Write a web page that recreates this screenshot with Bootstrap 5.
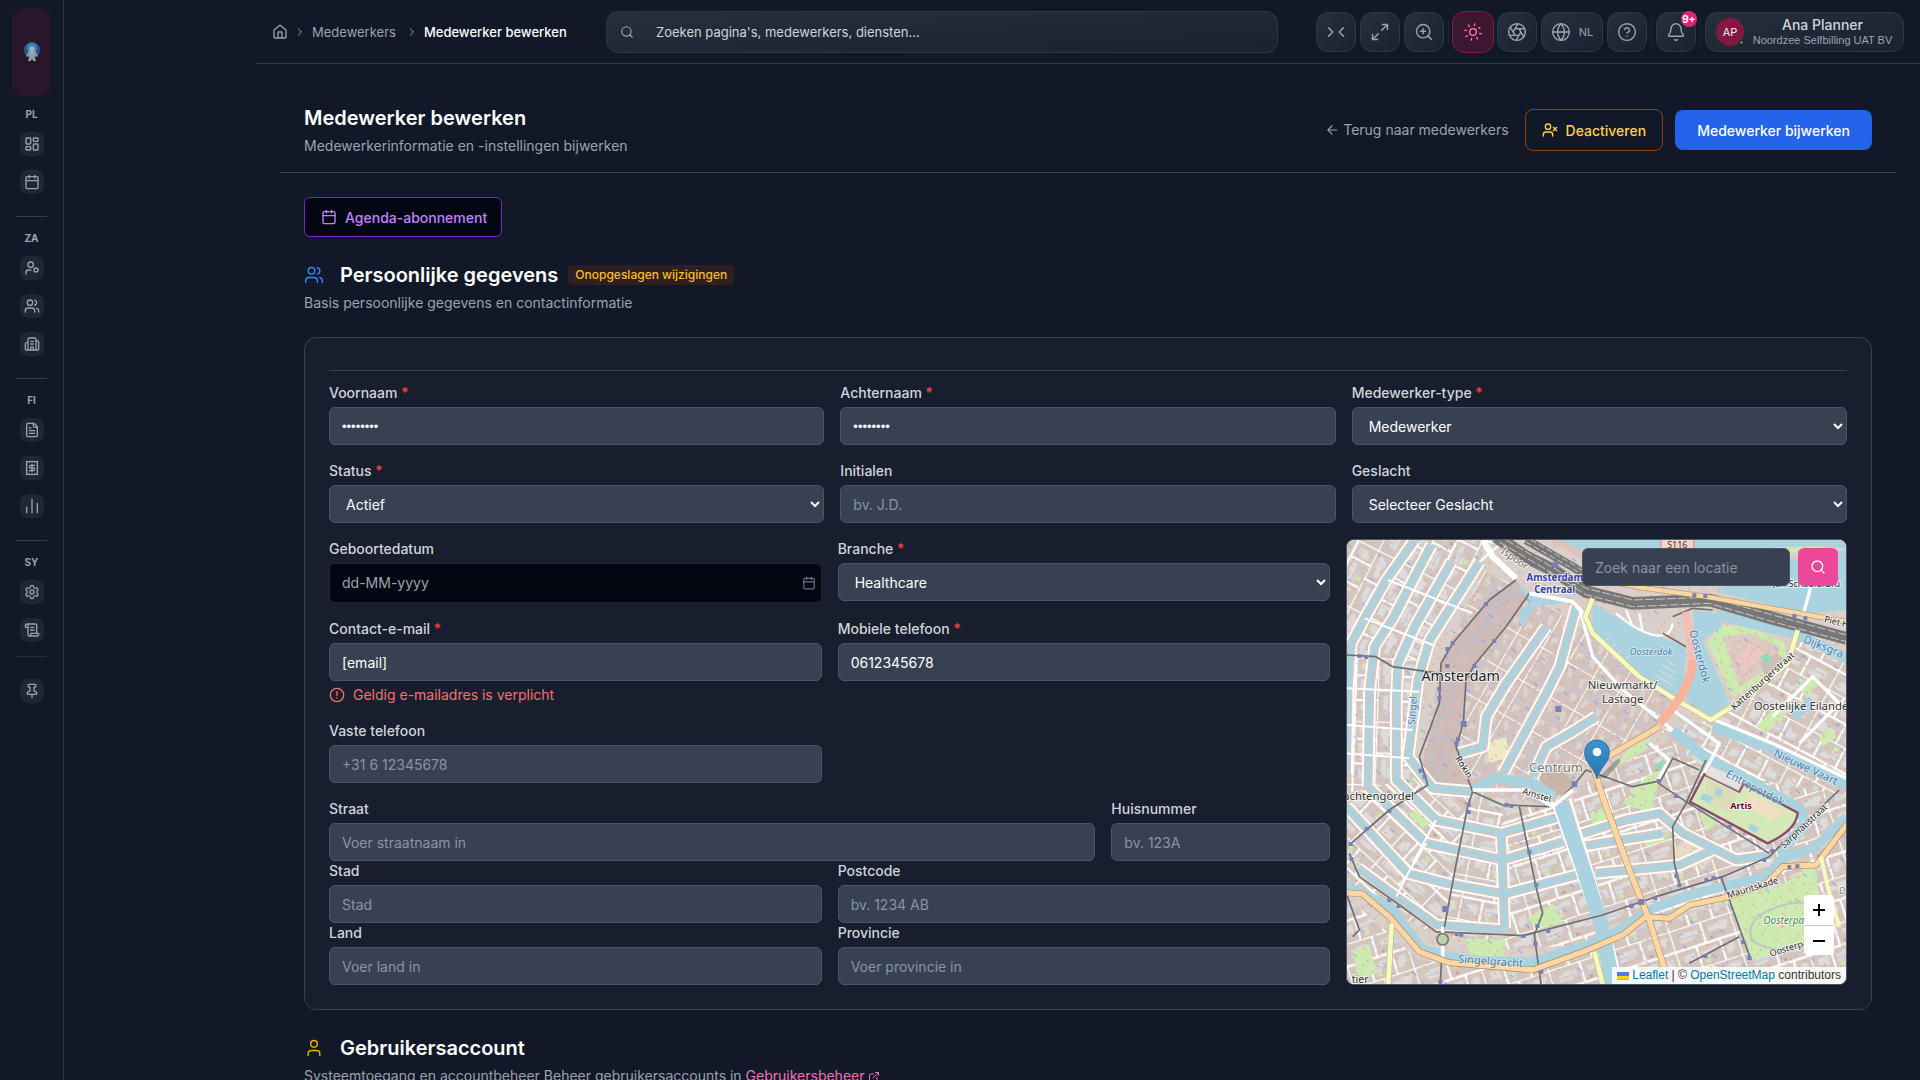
<!DOCTYPE html>
<html lang="nl">
<head>
    <meta charset="UTF-8">
    <meta name="viewport" content="width=device-width, initial-scale=1.0">
    <title>Medewerker bewerken</title>

    <!-- Bootstrap CSS -->
    <link href="https://cdn.jsdelivr.net/npm/bootstrap@5.3.2/dist/css/bootstrap.min.css" rel="stylesheet">
    <style>
        body {
            font-family: Inter, "Liberation Sans", sans-serif;
            font-size: 14px;
            line-height: 20px;
            background: #111827;
            color: #d1d5db;
        }
        svg { flex-shrink: 0; }
        a { text-decoration: none; }
        .ico {
            width: 16px;
            height: 16px;
            fill: none;
            stroke: currentColor;
            stroke-width: 2;
            stroke-linecap: round;
            stroke-linejoin: round;
        }
        .ico-14 { width: 14px; height: 14px; }
        .ico-12 { width: 12px; height: 12px; }
        .ico-20 { width: 20px; height: 20px; stroke-width: 1.7; }
        .fw-mid { font-weight: 500; }
        .muted { color: #9ca3af; }

        /* Sidebar */
        .side { width: 64px; border-right: 1px solid #2c3748; padding-top: 8px; }
        .side-logo { width: 39px; height: 88px; border-radius: 12px; background: #28172b; margin-bottom: 10px; }
        .side-label { font-size: 10px; line-height: 16px; font-weight: 700; color: #9ca3af; margin-bottom: 10px; }
        .side-icons { gap: 14px; }
        .side-link { width: 24px; height: 24px; border-radius: 8px; background: #1e2735; color: #9ca3af; }
        .side-line { width: 31px; height: 1px; background: #323d4e; margin: 22px 0 13px; }
        .side-line-end { margin: 14px 0 22px; background: #232d3c; }

        /* Top bar */
        .page-col { margin-left: 192px; min-width: 0; }
        .topbar { height: 64px; border-bottom: 1px solid #2c3748; padding: 0 16px; }
        .crumbs { width: 334px; gap: 6px; font-size: 13px; }
        .crumbs a { color: #9ca3af; }
        .glass { background: linear-gradient(to bottom right, #262f3d, #1a2231); border: 1px solid #2e3746; border-radius: 12px; color: #9ca3af; }
        .searchbar { height: 42px; width: 672px; padding: 0 13px; gap: 22px; }
        .searchbar input { background: none; border: 0; outline: 0; color: #d1d5db; padding: 0; font-size: 13px; }
        .searchbar input::placeholder { color: #d1d5db; opacity: 1; }
        .tools { gap: 4px; }
        .tool { height: 40px; min-width: 40px; padding: 0; }
        .tool-lang { width: 62px; gap: 8px; font-size: 11px; }
        .tool-sun { width: 42px; height: 42px; margin: 0 -1px; background: #3d1630; border-color: #7a1d49; color: #f472b6; }
        .tool-line { width: 1px; height: 24px; background: #1c2636; }
        .bell-badge { position: absolute; top: -2px; right: -2px; width: 16px; height: 16px; border-radius: 8px; background: #db2777; color: #fff; font-size: 10px; line-height: 16px; font-weight: 700; }
        .userbox { height: 40px; width: 199px; padding: 0 10px; gap: 8px; }
        .avatar { width: 28px; height: 28px; border-radius: 14px; background: #831843; color: #fce7f3; font-size: 11px; position: relative; }
        .avatar-dot { position: absolute; right: 0; bottom: 1px; width: 5px; height: 5px; border-radius: 3px; background: #22a34a; border: 1px solid #111827; }
        .user-name { font-size: 14px; line-height: 16px; color: #d1d5db; }
        .user-org { font-family: "Liberation Sans", sans-serif; font-size: 11px; line-height: 14px; }

        /* Page */
        .content { padding: 0 24px; }
        .page-head { padding: 40px 24px 16px; border-bottom: 1px solid #374151; }
        .page-head h1, .section-head h2 { font-size: 20px; line-height: 28px; font-weight: 600; color: #fff; }
        .page-body { padding: 24px; }
        .head-btn { height: 40px; border-radius: 8px; padding: 0 21px; font-size: 14px; font-weight: 500; }
        .btn-off { height: 42px; padding: 0 16px; margin-right: 12px; border: 1px solid #92400e; color: #fcd34d; }
        .btn-save { background: #2563eb; color: #fff; }
        .btn-agenda { border: 1px solid #7e22ce; border-radius: 6px; background: #030712; color: #c084fc; padding: 0 14px 0 16px; }
        .section-head { gap: 16px; margin-top: 24px; }
        .unsaved { height: 20px; padding: 0 7px; border-radius: 4px; background: #2f1f22; color: #fbbf24; font-size: 12px; font-weight: 500; margin-left: -6px; }
        .panel { border: 1px solid #374151; border-radius: 12px; background: #171e2d; padding: 32px 24px 24px; margin-top: 24px; }
        .panel-line { border-top: 1px solid #374151; padding-top: 12px; }
        .pink-link { color: #f472b6; }

        /* Form */
        .panel label { display: block; font-weight: 500; color: #d1d5db; margin-bottom: 4px; }
        .panel label span { color: #ef4444; }
        .field {
            display: block;
            width: 100%;
            height: 38px;
            border: 1px solid #4b5563;
            border-radius: 6px;
            background: #374151;
            color: #fff;
            padding: 0 12px;
            font-size: 14px;
        }
        .field::placeholder { color: #8b94a3; opacity: 1; }
        .masked { font-family: "Liberation Sans", sans-serif; font-size: 13px; }
        .date-field { height: 40px; background: #030712; border: 1px solid #1f2937; border-radius: 6px; padding: 0 5px 0 12px; }
        .date-field input { background: none; border: 0; outline: 0; padding: 0; color: #fff; }
        .date-field input::placeholder { color: #9ca3af; opacity: 1; }
        .form-split { display: grid; grid-template-columns: 2fr 1fr; gap: 16px; margin-top: 16px; }
        .form-pair { display: grid; grid-template-columns: 1fr 1fr; gap: 0 16px; }
        .form-street { display: grid; grid-template-columns: 7fr 2fr; gap: 0 16px; }
        .form-error { color: #f87171; margin-top: 4px; gap: 8px; }

        /* Map */
        .map { position: relative; border-radius: 8px; overflow: hidden; background: #d9d0c9; border: 1px solid #4b5563; }
        .map-canvas { position: absolute; width: 100%; height: 100%; }
        .map-search { position: absolute; top: 8px; right: 8px; gap: 8px; }
        .map-search .field { width: 208px; }
        .map-search button { width: 40px; height: 38px; border: 0; border-radius: 6px; background: #ec4899; color: #fff; }
        .map-zoom { position: absolute; right: 12px; bottom: 29px; border-radius: 4px; overflow: hidden; }
        .map-zoom button { width: 30px; height: 30px; border: 0; background: #fff; color: #000; }
        .map-zoom button + button { border-top: 1px solid #ccc; }
        .map-credit { position: absolute; right: 0; bottom: 0; height: 17px; padding: 0 5px; background: rgba(255, 255, 255, .85); color: #333; font: 12px/17px "Liberation Sans", Arial, sans-serif; gap: 3px; white-space: pre; }
        .map-credit a { color: #0078a8; }
    </style>
</head>
<body class="overflow-hidden">
    <!-- Icon set -->
    <svg class="d-none">
        <symbol id="i-dash" viewBox="0 0 24 24"><rect x="3" y="3" width="7" height="9" rx="1"/><rect x="14" y="3" width="7" height="5" rx="1"/><rect x="14" y="12" width="7" height="9" rx="1"/><rect x="3" y="16" width="7" height="5" rx="1"/></symbol>
        <symbol id="i-cal" viewBox="0 0 24 24"><path d="M8 2v4M16 2v4M3 10h18"/><rect x="3" y="4" width="18" height="18" rx="2"/></symbol>
        <symbol id="i-usercog" viewBox="0 0 24 24"><circle cx="10" cy="7" r="4"/><path d="M10.3 15H7a4 4 0 0 0-4 4v2"/><circle cx="18" cy="15" r="3"/></symbol>
        <symbol id="i-users" viewBox="0 0 24 24"><path d="M16 21v-2a4 4 0 0 0-4-4H6a4 4 0 0 0-4 4v2"/><circle cx="9" cy="7" r="4"/><path d="M22 21v-2a4 4 0 0 0-3-3.87M16 3.13a4 4 0 0 1 0 7.75"/></symbol>
        <symbol id="i-build" viewBox="0 0 24 24"><path d="M10 12h4M10 8h4M14 21v-3a2 2 0 0 0-4 0v3M6 10H4a2 2 0 0 0-2 2v7a2 2 0 0 0 2 2h16a2 2 0 0 0 2-2V9a2 2 0 0 0-2-2h-2M6 21V5a2 2 0 0 1 2-2h8a2 2 0 0 1 2 2v16"/></symbol>
        <symbol id="i-file" viewBox="0 0 24 24"><path d="M15 2H6a2 2 0 0 0-2 2v16a2 2 0 0 0 2 2h12a2 2 0 0 0 2-2V7ZM14 2v4a2 2 0 0 0 2 2h4M10 9H8M16 13H8M16 17H8"/></symbol>
        <symbol id="i-receipt" viewBox="0 0 24 24"><path d="M4 2v20l2-1 2 1 2-1 2 1 2-1 2 1 2-1 2 1V2l-2 1-2-1-2 1-2-1-2 1-2-1-2 1ZM16 8h-6a2 2 0 1 0 0 4h4a2 2 0 1 1 0 4H8M12 17.5v-11"/></symbol>
        <symbol id="i-chart" viewBox="0 0 24 24"><path d="M4 22v-8M12 22V2M20 22V8"/></symbol>
        <symbol id="i-gear" viewBox="0 0 24 24"><path d="M9.671 4.136a2.34 2.34 0 0 1 4.659 0 2.34 2.34 0 0 0 3.319 1.915 2.34 2.34 0 0 1 2.33 4.033 2.34 2.34 0 0 0 0 3.831 2.34 2.34 0 0 1-2.33 4.033 2.34 2.34 0 0 0-3.319 1.915 2.34 2.34 0 0 1-4.659 0 2.34 2.34 0 0 0-3.32-1.915 2.34 2.34 0 0 1-2.33-4.033 2.34 2.34 0 0 0 0-3.831A2.34 2.34 0 0 1 6.35 6.051a2.34 2.34 0 0 0 3.319-1.915"/><circle cx="12" cy="12" r="3"/></symbol>
        <symbol id="i-scroll" viewBox="0 0 24 24"><path d="M15 12h-5M15 8h-5M19 17V5a2 2 0 0 0-2-2H4M8 21h12a2 2 0 0 0 2-2v-1a1 1 0 0 0-1-1H11a1 1 0 0 0-1 1v1a2 2 0 1 1-4 0V5a2 2 0 1 0-4 0v2a1 1 0 0 0 1 1h3"/></symbol>
        <symbol id="i-pin" viewBox="0 0 24 24"><path d="M12 17v5M9 10.76a2 2 0 0 1-1.11 1.79l-1.78.9A2 2 0 0 0 5 15.24V16a1 1 0 0 0 1 1h12a1 1 0 0 0 1-1v-.76a2 2 0 0 0-1.11-1.79l-1.78-.9A2 2 0 0 1 15 10.76V7a1 1 0 0 1 1-1 2 2 0 0 0 0-4H8a2 2 0 0 0 0 4 1 1 0 0 1 1 1z"/></symbol>
        <symbol id="i-home" viewBox="0 0 24 24"><path d="M15 21v-8a1 1 0 0 0-1-1h-4a1 1 0 0 0-1 1v8M3 10a2 2 0 0 1 .709-1.528l7-6a2 2 0 0 1 2.582 0l7 6A2 2 0 0 1 21 10v9a2 2 0 0 1-2 2H5a2 2 0 0 1-2-2z"/></symbol>
        <symbol id="i-chev" viewBox="0 0 24 24"><path d="m9 18 6-6-6-6"/></symbol>
        <symbol id="i-search" viewBox="0 0 24 24"><circle cx="11" cy="11" r="8"/><path d="m21 21-4.3-4.3"/></symbol>
        <symbol id="i-collapse" viewBox="0 0 24 24"><path d="m21 17-5-5 5-5M3 17l5-5-5-5"/></symbol>
        <symbol id="i-max" viewBox="0 0 24 24"><path d="M15 3h6v6M21 3l-7 7M3 21l7-7M9 21H3v-6"/></symbol>
        <symbol id="i-zoom" viewBox="0 0 24 24"><circle cx="11" cy="11" r="8"/><path d="m21 21-4.35-4.35M11 8v6M8 11h6"/></symbol>
        <symbol id="i-sun" viewBox="0 0 24 24"><g transform="rotate(12 12 12)"><circle cx="12" cy="12" r="4"/><path d="M12 2v2M12 20v2M4.93 4.93l1.41 1.41M17.66 17.66l1.41 1.41M2 12h2M20 12h2M6.34 17.66l-1.41 1.41M19.07 4.93l-1.41 1.41"/></g></symbol>
        <symbol id="i-aperture" viewBox="0 0 24 24"><circle cx="12" cy="12" r="10"/><path d="m14.31 8 5.74 9.94M9.69 8h11.48M7.38 12l5.74-9.94M9.69 16 3.95 6.06M14.31 16H2.83M16.62 12l-5.74 9.94"/></symbol>
        <symbol id="i-globe" viewBox="0 0 24 24"><circle cx="12" cy="12" r="10"/><path d="M12 2a14.5 14.5 0 0 0 0 20 14.5 14.5 0 0 0 0-20M2 12h20"/></symbol>
        <symbol id="i-help" viewBox="0 0 24 24"><circle cx="12" cy="12" r="10"/><path d="M9.09 9a3 3 0 0 1 5.83 1c0 2-3 3-3 3M12 17h.01"/></symbol>
        <symbol id="i-bell" viewBox="0 0 24 24"><path d="M10.268 21a2 2 0 0 0 3.464 0M3.262 15.326A1 1 0 0 0 4 17h16a1 1 0 0 0 .74-1.673C19.41 13.956 18 12.499 18 8A6 6 0 0 0 6 8c0 4.499-1.411 5.956-2.738 7.326"/></symbol>
        <symbol id="i-back" viewBox="0 0 24 24"><path d="m12 19-7-7 7-7M20 12H5"/></symbol>
        <symbol id="i-userx" viewBox="0 0 24 24"><path d="M16 21v-2a4 4 0 0 0-4-4H6a4 4 0 0 0-4 4v2"/><circle cx="9" cy="7" r="4"/><path d="m17 8 5 5M22 8l-5 5"/></symbol>
        <symbol id="i-user" viewBox="0 0 24 24"><path d="M19 21v-2a4 4 0 0 0-4-4H9a4 4 0 0 0-4 4v2"/><circle cx="12" cy="7" r="4"/></symbol>
        <symbol id="i-alert" viewBox="0 0 24 24"><circle cx="12" cy="12" r="10"/><path d="M12 7v6M12 16.5h.01"/></symbol>
        <symbol id="i-ext" viewBox="0 0 24 24"><path d="M15 3h6v6M10 14 21 3M18 13v6a2 2 0 0 1-2 2H5a2 2 0 0 1-2-2V8a2 2 0 0 1 2-2h6"/></symbol>
    </svg>

    <div class="d-flex vh-100">
        <!-- Sidebar -->
        <aside class="side d-flex flex-column align-items-center flex-shrink-0">
            <a href="#" class="side-logo d-flex align-items-center justify-content-center" aria-label="Home">
                <svg width="16" height="20" viewBox="0 0 16 20">
                    <circle cx="8" cy="8" r="8" fill="#235a8c"/>
                    <circle cx="8" cy="6" r="5" fill="#3b82b8"/>
                    <circle cx="8" cy="7" r="2.5" fill="#a8b4bf"/>
                    <path d="M5 9h6l3 5-1 1-2-2v3l1 3H9l-1-3-1 3H4l1-3v-3l-2 2-1-1z" fill="#98a1aa"/>
                    <circle cx="8" cy="12" r="1.3" fill="#4cc3e8"/>
                </svg>
            </a>
            <div class="side-label">PL</div>
            <nav class="side-icons d-flex flex-column">
                <a href="#" class="side-link d-flex align-items-center justify-content-center" aria-label="Dashboard"><svg class="ico"><use href="#i-dash"/></svg></a>
                <a href="#" class="side-link d-flex align-items-center justify-content-center" aria-label="Agenda"><svg class="ico"><use href="#i-cal"/></svg></a>
            </nav>
            <div class="side-line"></div>
            <div class="side-label">ZA</div>
            <nav class="side-icons d-flex flex-column">
                <a href="#" class="side-link d-flex align-items-center justify-content-center" aria-label="Medewerkers"><svg class="ico"><use href="#i-usercog"/></svg></a>
                <a href="#" class="side-link d-flex align-items-center justify-content-center" aria-label="Klanten"><svg class="ico"><use href="#i-users"/></svg></a>
                <a href="#" class="side-link d-flex align-items-center justify-content-center" aria-label="Organisaties"><svg class="ico"><use href="#i-build"/></svg></a>
            </nav>
            <div class="side-line"></div>
            <div class="side-label">FI</div>
            <nav class="side-icons d-flex flex-column">
                <a href="#" class="side-link d-flex align-items-center justify-content-center" aria-label="Facturen"><svg class="ico"><use href="#i-file"/></svg></a>
                <a href="#" class="side-link d-flex align-items-center justify-content-center" aria-label="Betalingen"><svg class="ico"><use href="#i-receipt"/></svg></a>
                <a href="#" class="side-link d-flex align-items-center justify-content-center" aria-label="Rapporten"><svg class="ico"><use href="#i-chart"/></svg></a>
            </nav>
            <div class="side-line"></div>
            <div class="side-label">SY</div>
            <nav class="side-icons d-flex flex-column">
                <a href="#" class="side-link d-flex align-items-center justify-content-center" aria-label="Instellingen"><svg class="ico"><use href="#i-gear"/></svg></a>
                <a href="#" class="side-link d-flex align-items-center justify-content-center" aria-label="Logboek"><svg class="ico"><use href="#i-scroll"/></svg></a>
            </nav>
            <div class="side-line side-line-end"></div>
            <a href="#" class="side-link d-flex align-items-center justify-content-center" aria-label="Vastzetten"><svg class="ico"><use href="#i-pin"/></svg></a>
        </aside>

        <div class="page-col flex-grow-1">
            <!-- Top bar -->
            <header class="topbar d-flex align-items-center">
                <nav class="crumbs d-flex align-items-center flex-shrink-0">
                    <a href="#" class="d-flex" aria-label="Home"><svg class="ico"><use href="#i-home"/></svg></a>
                    <svg class="ico ico-12 muted"><use href="#i-chev"/></svg>
                    <a href="#" class="me-1">Medewerkers</a>
                    <svg class="ico ico-12 muted"><use href="#i-chev"/></svg>
                    <span class="text-white fw-mid text-nowrap">Medewerker bewerken</span>
                </nav>
                <div class="searchbar glass d-flex align-items-center">
                    <svg class="ico ico-14"><use href="#i-search"/></svg>
                    <input type="text" class="flex-grow-1" placeholder="Zoeken pagina's, medewerkers, diensten..." aria-label="Zoeken">
                </div>
                <div class="tools d-flex align-items-center ms-auto">
                    <button class="tool glass d-flex align-items-center justify-content-center" aria-label="Inklappen"><svg class="ico ico-20"><use href="#i-collapse"/></svg></button>
                    <button class="tool glass d-flex align-items-center justify-content-center" aria-label="Volledig scherm"><svg class="ico ico-20"><use href="#i-max"/></svg></button>
                    <button class="tool glass d-flex align-items-center justify-content-center" aria-label="Zoom"><svg class="ico ico-20"><use href="#i-zoom"/></svg></button>
                    <div class="tool-line"></div>
                    <button class="tool tool-sun glass d-flex align-items-center justify-content-center" aria-label="Thema"><svg class="ico ico-20"><use href="#i-sun"/></svg></button>
                    <button class="tool glass d-flex align-items-center justify-content-center" aria-label="Kleuren"><svg class="ico ico-20"><use href="#i-aperture"/></svg></button>
                    <button class="tool tool-lang glass d-flex align-items-center justify-content-center"><svg class="ico ico-20"><use href="#i-globe"/></svg>NL</button>
                    <button class="tool glass d-flex align-items-center justify-content-center" aria-label="Help"><svg class="ico ico-20"><use href="#i-help"/></svg></button>
                    <div class="tool-line"></div>
                    <button class="tool glass d-flex align-items-center justify-content-center position-relative" aria-label="Meldingen"><svg class="ico ico-20"><use href="#i-bell"/></svg><span class="bell-badge">9+</span></button>
                    <div class="tool-line"></div>
                    <button class="userbox glass d-flex align-items-center">
                        <span class="avatar d-flex align-items-center justify-content-center flex-shrink-0">AP<span class="avatar-dot"></span></span>
                        <span class="flex-grow-1 text-center text-nowrap">
                            <span class="user-name fw-mid d-block">Ana Planner</span>
                            <span class="user-org d-block">Noordzee Selfbilling UAT BV</span>
                        </span>
                    </button>
                </div>
            </header>

            <main class="content">
                <div class="page-head d-flex justify-content-between align-items-center">
                    <div>
                        <h1 class="mb-1">Medewerker bewerken</h1>
                        <p class="muted mb-0">Medewerkerinformatie en -instellingen bijwerken</p>
                    </div>
                    <div class="d-flex align-items-center">
                        <a href="#" class="muted d-flex align-items-center gap-1 me-3"><svg class="ico ico-14"><use href="#i-back"/></svg>Terug naar medewerkers</a>
                        <button class="btn head-btn btn-off d-flex align-items-center gap-2"><svg class="ico"><use href="#i-userx"/></svg>Deactiveren</button>
                        <button class="btn head-btn btn-save">Medewerker bijwerken</button>
                    </div>
                </div>

                <div class="page-body">
                    <button class="btn head-btn btn-agenda d-inline-flex align-items-center gap-2"><svg class="ico"><use href="#i-cal"/></svg>Agenda-abonnement</button>

                    <div class="section-head d-flex align-items-center">
                        <svg class="ico ico-20" color="#3b82f6"><use href="#i-users"/></svg>
                        <h2 class="mb-0">Persoonlijke gegevens</h2>
                        <span class="unsaved">Onopgeslagen wijzigingen</span>
                    </div>
                    <p class="muted mt-1 mb-0">Basis persoonlijke gegevens en contactinformatie</p>

                    <form class="panel">
                        <div class="panel-line">
                            <div class="row g-3">
                                <div class="col-4">
                                    <label for="firstName">Voornaam <span>*</span></label>
                                    <input type="text" class="field masked" id="firstName" value="••••••••">
                                </div>
                                <div class="col-4">
                                    <label for="lastName">Achternaam <span>*</span></label>
                                    <input type="text" class="field masked" id="lastName" value="••••••••">
                                </div>
                                <div class="col-4">
                                    <label for="kind">Medewerker-type <span>*</span></label>
                                    <select class="field" id="kind"><option>Medewerker</option></select>
                                </div>
                                <div class="col-4">
                                    <label for="status">Status <span>*</span></label>
                                    <select class="field" id="status"><option>Actief</option></select>
                                </div>
                                <div class="col-4">
                                    <label for="initials">Initialen</label>
                                    <input type="text" class="field" id="initials" placeholder="bv. J.D.">
                                </div>
                                <div class="col-4">
                                    <label for="gender">Geslacht</label>
                                    <select class="field" id="gender"><option>Selecteer Geslacht</option></select>
                                </div>
                            </div>
                        </div>

                        <div class="form-split">
                            <div>
                                <div class="form-pair mb-3">
                                    <div>
                                        <label for="birth">Geboortedatum</label>
                                        <div class="date-field d-flex align-items-center">
                                            <input type="text" class="flex-grow-1" id="birth" placeholder="dd-MM-yyyy">
                                            <svg class="ico ico-14" color="#6b7280"><use href="#i-cal"/></svg>
                                        </div>
                                    </div>
                                    <div>
                                        <label for="branch">Branche <span>*</span></label>
                                        <select class="field" id="branch"><option>Healthcare</option></select>
                                    </div>
                                </div>
                                <div class="form-pair mb-3">
                                    <div>
                                        <label for="email">Contact-e-mail <span>*</span></label>
                                        <input type="text" class="field" id="email" value="[email]">
                                        <div class="form-error d-flex align-items-center"><svg class="ico"><use href="#i-alert"/></svg>Geldig e-mailadres is verplicht</div>
                                    </div>
                                    <div>
                                        <label for="mobile">Mobiele telefoon <span>*</span></label>
                                        <input type="text" class="field" id="mobile" value="0612345678">
                                    </div>
                                </div>
                                <div class="form-pair mb-3">
                                    <div>
                                        <label for="phone">Vaste telefoon</label>
                                        <input type="text" class="field" id="phone" placeholder="+31 6 12345678">
                                    </div>
                                </div>
                                <div class="form-street">
                                    <div>
                                        <label for="street">Straat</label>
                                        <input type="text" class="field" id="street" placeholder="Voer straatnaam in">
                                    </div>
                                    <div>
                                        <label for="houseNo">Huisnummer</label>
                                        <input type="text" class="field" id="houseNo" placeholder="bv. 123A">
                                    </div>
                                </div>
                                <div class="form-pair">
                                    <div>
                                        <label for="city">Stad</label>
                                        <input type="text" class="field" id="city" placeholder="Stad">
                                    </div>
                                    <div>
                                        <label for="zip">Postcode</label>
                                        <input type="text" class="field" id="zip" placeholder="bv. 1234 AB">
                                    </div>
                                    <div>
                                        <label for="country">Land</label>
                                        <input type="text" class="field" id="country" placeholder="Voer land in">
                                    </div>
                                    <div>
                                        <label for="province">Provincie</label>
                                        <input type="text" class="field" id="province" placeholder="Voer provincie in">
                                    </div>
                                </div>
                            </div>

                            <!-- Map -->
                            <div class="map">
                                <svg class="map-canvas" viewBox="21 30 1500 1332" preserveAspectRatio="xMidYMid slice" font-family="Noto Sans, sans-serif">
                                    <defs>
                                        <!-- city blocks: buildings round courtyards, streets between them -->
                                        <pattern id="blocks" width="132" height="190" patternUnits="userSpaceOnUse" patternTransform="rotate(27)">
                                            <rect width="132" height="190" fill="#d2c6be"/>
                                            <path d="M16 14h12v8h14v22h-6v34H20V52h-6V26zM82 16h26v12h8v16H92v-8H82zM80 66h16v30h14v22H86V96h-6zM18 112h20v14h8v42H24v-16h-6zM82 140h30v10h-8v24H84z" fill="#dedcda"/>
                                            <path d="M0 0H132M0 0V190M66 0V190M66 54H132M0 96H66M66 128H132" fill="none" stroke="#fff" stroke-width="7"/>
                                            <path d="M34 96V190M98 54V128" stroke="#c9c9d8" stroke-width="4"/>
                                            <path d="M50 70h8v10h-8z" fill="#b9a79b"/>
                                            <path d="M112 98h12v14h-12z" fill="#cdebb0"/>
                                        </pattern>
                                        <pattern id="blocksW" href="#blocks" patternTransform="rotate(2)"/>
                                        <pattern id="blocksSW" href="#blocks" patternTransform="rotate(-47)"/>
                                        <pattern id="blocksS" href="#blocks" patternTransform="translate(0 20) rotate(101)"/>
                                        <pattern id="blocksSE" href="#blocks" patternTransform="rotate(72)"/>
                                        <pattern id="blocksE" href="#blocks" patternTransform="rotate(-62)"/>
                                        <pattern id="blocksC" width="88" height="116" patternUnits="userSpaceOnUse" patternTransform="rotate(30)">
                                            <rect width="88" height="116" fill="#d3c3bb"/>
                                            <path d="M14 12h10v10h8v18H20V30h-6zM58 20h16v30H64V36h-6zM12 72h20v14H20v12h-8zM56 74h18v22H60V84h-4z" fill="#dbd5d1"/>
                                            <path d="M0 0H88M0 0V116" stroke="#fff" stroke-width="6"/>
                                            <path d="M0 58H88M44 0V58M50 58V116" fill="none" stroke="#c6c6d6" stroke-width="5"/>
                                        </pattern>
                                        <pattern id="dots" width="94" height="78" patternUnits="userSpaceOnUse" patternTransform="rotate(17)">
                                            <path d="M8 10h4M14 13h3M20 16h3M60 8h4M66 12h3M18 48h4M24 46h3M44 60h4M80 40h4M84 46h3M10 70h4M66 70h4" stroke="#f29a90" stroke-width="4"/>
                                            <path d="M34 34h3M39 36h3M44 38h3M72 56h3" stroke="#6a6af0" stroke-width="3"/>
                                        </pattern>
                                        <linearGradient id="pinBlue" x1="0" y1="0" x2="0" y2="1"><stop offset="0" stop-color="#3a93cf"/><stop offset="1" stop-color="#2a76b5"/></linearGradient>
                                    </defs>

                                    <rect x="21" y="30" width="1500" height="1332" fill="#d9d0c9"/>
                                    <path d="M21 30H480L240 400 21 380z" fill="url(#blocks)"/>
                                    <path d="M21 370 240 390 210 640 260 760 21 800z" fill="url(#blocksW)"/>
                                    <path d="M430 120 570 190 760 320 1020 510 960 600 740 700 640 830 400 780 240 740 300 420z" fill="url(#blocksC)"/>
                                    <path d="M530 150 450 210 340 340 305 400 290 560 250 690 270 760 400 780 350 680 375 500 405 405 570 200z" fill="#d0bcb7"/>
                                    <path d="M520 170 420 300 330 390M540 200 480 230 400 340M560 190 500 190 430 250M470 180 500 280M420 230 460 300M380 290 430 340M345 330 390 380M350 440 330 560 300 700 330 770M320 440 310 540 270 680 300 760M300 560 370 580M290 620 360 640M270 670 350 690" fill="none" stroke="#bebecd" stroke-width="6"/>
                                    <path d="M21 790 240 740 390 790 310 1220 180 1160 21 1060z" fill="url(#blocksSW)"/>
                                    <path d="M390 790H495V1230L310 1220z" fill="url(#blocksS)"/>
                                    <path d="M490 830H650L780 1240 490 1260z" fill="url(#blocksSE)"/>
                                    <path d="M700 780 1000 620 1521 760V1060L930 1160 760 1200z" fill="url(#blocksSE)"/>
                                    <path d="M960 600 1120 570 1380 320 1521 380V800L1100 720z" fill="url(#blocksE)"/>
                                    <path d="M21 1100 240 1290 580 1330 930 1180 1521 1040V1362H21z" fill="url(#blocksSE)"/>

                                    <!-- parks and squares -->
                                    <g fill="#cdebb0">
                                        <path d="M205 855 225 840 272 878 250 895zM565 1165 640 1120 670 1180 590 1195zM750 850 790 835 805 870 765 890zM920 740 970 720 930 850 850 820zM1080 850 1110 845 1135 880 1100 905zM910 920 960 895 985 930 920 950z"/>
                                        <path d="M1150 1110 1340 1060 1420 1000 1440 1090 1390 1240 1240 1290 1180 1130z"/>
                                        <path d="M380 1225 500 1230 490 1290 390 1270zM40 1270 90 1240 110 1330 60 1350zM1140 285 1230 290 1340 340 1330 420 1180 500 1105 340zM1090 60 1430 30 1440 55 1120 110z"/>
                                        <path d="M870 650 930 625 940 645 830 710zM1250 590 1330 510 1350 540 1280 610zM1380 480 1420 440 1440 460 1400 500zM1440 620 1470 590 1490 620 1450 650z"/>
                                    </g>
                                    <path d="M1150 320 1230 310 1320 350 1310 400 1200 470z" fill="#dccbc0"/>
                                    <path d="M1180 380 1230 335 1290 370 1210 440z" fill="#e8c9c2" stroke="#d0b0ab" stroke-width="2"/>
                                    <path d="M1265 400 1310 370 1340 390 1280 450z" fill="#cfc0b6"/>
                                    <path d="M1262 380 1285 368 1298 388 1276 402z" fill="#8fdcbc"/>
                                    <path d="M970 690 980 670 965 720 940 715z" fill="#8fdcbc"/>
                                    <path d="M590 735 650 710 700 750 690 790 640 800z" fill="#c9b6aa"/>
                                    <path d="M1000 950 1110 930 1120 990 1010 1030z" fill="#e8dcc4"/>
                                    <path d="M440 640 500 620 510 680 450 700z" fill="#efe9c4"/>
                                    <path d="M21 30H1521V1362H21z" fill="url(#dots)"/>

                                    <!-- open water -->
                                    <g fill="#aad3df">
                                        <path d="M650 30H1521V55L1440 48 1090 60 940 100 700 60z"/>
                                        <path d="M1240 110 1521 60V240L1400 250 1130 185z"/>
                                        <path d="M760 220 830 260 960 320 1040 350 1032 470 1000 505 940 470 870 410 775 320 760 290z"/>
                                        <path d="M1060 240 1130 250 1150 290 1090 330 1120 400 1170 520 1110 560 1040 510 1066 390z"/>
                                        <path d="M530 160 600 205 700 200 690 215 590 230 560 200zM540 240 570 220 590 230 545 290z"/>
                                    </g>
                                    <path d="M960 420l50 30M970 405l40 24M950 436l50 30M980 390l30 18M780 350l30-30M800 370l30-30M820 388l28-28M842 404l26-26" stroke="#d9d9dd" stroke-width="4"/>
                                    <g fill="none" stroke-linejoin="round">
                                        <g stroke="#fff" stroke-width="38"><path id="canals" d="M226 30 141 150 76 265 36 340 26 480 21 730M276 45 161 265 106 350 91 480 86 770M336 95 226 290 176 400 171 510 171 750 291 870 486 910 661 860M421 95 271 330 236 450 206 680 281 775 400 785M86 770 261 940 491 990 671 935M21 830 206 1030 321 1060 496 1092 711 1035M56 1015 171 1100 291 1185 501 1200M486 910 496 1195M711 230 661 410 621 490 561 600 491 730M621 290 501 460 441 560 431 650 361 670M771 560 691 610 621 650 581 740M700 920 861 870 961 850 1031 910 1191 990 1291 975M721 950 971 910M770 1030 1021 1005 1120 960"/></g>
                                        <use href="#canals" stroke="#d3c7bf" stroke-width="27"/>
                                        <use href="#canals" stroke="#aad3df" stroke-width="16"/>
                                        <path d="M146 150 400 250M76 265 280 345M21 475 240 485M21 585 220 600M21 670 210 685M290 870 220 1000M261 940 206 1030 171 1100M486 40 421 95M470 40 430 30" stroke="#fff" stroke-width="6"/>
                                        <path d="M1120 590 1300 655 1521 765M1130 255 1370 310 1521 385M1000 600 1095 680 1380 835 1400 880 1320 970M1360 560 1420 510" stroke="#aad3df" stroke-width="32"/>
                                        <path d="M400 780 470 745 580 760 645 800" stroke="#aad3df" stroke-width="30"/>
                                        <path d="M638 815 705 1010 765 1170 820 1362M692 805 755 1010 800 1170 850 1362" stroke="#fff" stroke-width="7"/>
                                        <path d="M665 820 730 1010 785 1180 820 1362" stroke="#aad3df" stroke-width="44"/>
                                        <path d="M21 1068 150 1128 250 1260 400 1292 580 1296 800 1225 930 1140 1050 1095 1150 1070 1280 1040 1330 985 1430 950 1521 860" stroke="#aad3df" stroke-width="28"/>
                                        <path d="M1115 565 1300 640 1521 745M720 230 760 380 850 480 1000 600M1000 540 1140 640 1090 740M930 640 990 690M1420 150 1390 260M1300 560 1420 440 1500 520M1380 640 1500 520M950 760 990 690" stroke="#fff" stroke-width="10"/>
                                        <path d="M430 30 460 80 530 145" stroke="#fff" stroke-width="18"/>
                                        <path d="M830 250C900 310 990 350 1000 280M860 240 880 290M900 250 910 305" stroke="#fff" stroke-width="7"/>

                                        <!-- railway -->
                                        <path d="M470 20 560 80 640 120 740 185 880 220 1110 210 1300 265 1521 325" stroke="#777" stroke-width="38"/>
                                        <path d="M500 30 640 112 740 175 880 210 1110 202 1300 255 1521 315M480 36 640 130 740 194 880 230 1110 220 1300 275 1521 335" stroke="#c8c8c8" stroke-width="3" stroke-dasharray="26 7"/>
                                        <path d="M560 30 700 110 760 150" stroke="#777" stroke-width="26"/>
                                        <path d="M560 36 700 116 760 156M575 30 700 102 760 142" stroke="#c8c8c8" stroke-width="3" stroke-dasharray="18 9"/>
                                        <path d="M640 30 740 80" stroke="#ddc3b8" stroke-width="20"/>

                                        <!-- trams -->
                                        <g stroke="#6d6d72" stroke-width="5">
                                            <path d="M570 190 500 290 405 405 380 450 372 580 350 650 400 785 385 830 345 1030 310 1220 303 1362"/>
                                            <path d="M530 150 450 210 340 340 305 400 300 520 240 680 265 765 150 840 35 940M21 375 110 380 160 410 300 430"/>
                                            <path d="M30 970 60 1040 180 1125 290 1205 550 1217 790 1155 950 1100 1150 1040 1290 980 1330 940 1500 780"/>
                                            <path d="M400 785 490 825 640 830 700 770 740 720 880 770 950 755 1040 815 1290 970"/>
                                            <path d="M540 830 590 1070 610 1150 585 1215 605 1362M1100 690 1040 820 1000 890 1005 1000 1020 1060M1145 1040 1235 1290"/>
                                            <path d="M1050 1300 1200 1220M960 760 1000 685 1080 720M970 310 1040 350M1000 260 1060 235 1120 240M21 1090 60 1200 40 1220"/>
                                        </g>
                                        <path d="M570 190 700 215 740 260M400 780 560 780 640 830 700 780M310 1190V1290" stroke="#fff" stroke-width="11"/>

                                        <!-- main roads -->
                                        <g stroke="#a98a55">
                                            <path d="M770 145 900 172 1100 200 1521 275" stroke-width="16"/>
                                            <path d="M21 1088 70 1092 150 1160 240 1265 330 1298 580 1320 740 1262 850 1215 920 1160 990 1165 1050 1125 1150 1105 1280 1062 1330 1010 1430 1005 1521 885" stroke-width="20"/>
                                            <path d="M960 590 900 625 760 705 790 800 870 1020 930 1170 990 1362" stroke-width="20"/>
                                        </g>
                                        <g stroke="#fcd6a4">
                                            <path d="M770 145 900 172 1100 200 1521 275" stroke-width="13"/>
                                            <path d="M21 1088 70 1092 150 1160 240 1265 330 1298 580 1320 740 1262 850 1215 920 1160 990 1165 1050 1125 1150 1105 1280 1062 1330 1010 1430 1005 1521 885" stroke-width="16"/>
                                            <path d="M960 590 900 625 760 705 790 800 870 1020 930 1170 990 1362" stroke-width="17"/>
                                        </g>
                                        <path d="M760 205 738 260 760 310 900 440 1020 515 1115 570 1210 510 1345 400 1375 300M157 1180 147 1362M765 1265 790 1362" stroke="#b9bd8a" stroke-width="18"/>
                                        <path d="M760 205 738 260 760 310 900 440 1020 515 1115 570 1210 510 1345 400 1375 300M157 1180 147 1362M765 1265 790 1362" stroke="#f7fabf" stroke-width="14"/>
                                        <path d="M1040 245 1060 390" stroke="#f5bdb4" stroke-width="22"/>
                                        <path d="M1060 390C1060 440 1035 500 960 580" stroke="#f9b29c" stroke-width="26"/>
                                        <path d="M1445 980 1470 1090 1500 1190" stroke="#f7fabf" stroke-width="12"/>
                                        <path d="M1240 1180c30-50 140-70 170-60 60 20 70 70 30 110-60 30-160 40-200 0-10-15-10-30 0-50z" stroke="#c4c8c0" stroke-width="7"/>
                                    </g>

                                    <!-- Artis -->
                                    <path d="M1095 733 1200 785 1212 762 1375 848Q1372 900 1285 940L1052 815z" fill="#d5e8b8" stroke="#8a4a68" stroke-width="7"/>
                                    <path d="M1100 745 1195 790 1180 850 1100 820z" fill="#dcdcb8"/>
                                    <path d="M1220 785 1340 850 1290 870 1230 830z" fill="#f0dfc0"/>
                                    <path d="M1090 790l30 10-10 20-30-14zM1230 880l30 14-10 16-24-12zM1130 770l20 8-4 24-22-8z" fill="#aad3df"/>
                                    <path d="M1112 706 1212 750 1198 782 1100 735z" fill="#e4e2df" stroke="#c8c0b8" stroke-width="2"/>

                                    <circle cx="310" cy="1228" r="17" fill="#b7d3a8" stroke="#777" stroke-width="5"/>

                                    <!-- stops -->
                                    <path d="M640 95h18v18h-18zM434 216h12v12h-12zM334 333h12v12h-12zM318 351h12v12h-12zM459 327h12v12h-12zM54 372h12v12h-12zM75 375h12v12h-12zM318 402h12v12h-12zM399 402h12v12h-12zM294 471h12v12h-12zM294 498h12v12h-12zM648 528h18v18h-18zM364 573h18v18h-18zM350 621h12v12h-12zM345 634h12v12h-12zM238 716h12v12h-12zM250 734h12v12h-12zM1059 190h12v12h-12zM1092 192h12v12h-12zM1359 252h12v12h-12zM1392 259h12v12h-12zM697 754h17v17h-17zM382 819h12v12h-12zM382 840h12v12h-12zM495 819h12v12h-12zM510 822h12v12h-12zM144 837h12v12h-12zM76 891h12v12h-12zM28 936h12v12h-12zM30 981h12v12h-12zM309 1128h18v18h-18zM144 1104h12v12h-12zM172 1122h12v12h-12zM346 1206h12v12h-12zM360 1208h12v12h-12zM546 1212h12v12h-12zM564 960h12v12h-12zM585 1059h12v12h-12zM588 1182h12v12h-12zM621 1197h12v12h-12zM582 1236h12v12h-12zM897 1107h18v18h-18zM870 1122h12v12h-12zM942 1098h12v12h-12zM1095 1044h12v12h-12zM1116 1038h12v12h-12zM1005 1032h12v12h-12zM1014 1060h12v12h-12zM951 747h12v12h-12zM1004 792h12v12h-12zM1164 885h12v12h-12zM1269 984h12v12h-12zM1293 957h12v12h-12zM1344 1005h12v12h-12zM1368 1003h12v12h-12zM1206 1230h12v12h-12zM1224 1278h12v12h-12zM1092 1272h12v12h-12zM600 1320h12v12h-12zM297 1350h12v12h-12z" fill="#7880b8"/>

                                    <!-- labels -->
                                    <g stroke="#fff" stroke-opacity=".75" stroke-width="6" stroke-linejoin="round" paint-order="stroke" text-anchor="middle">
                                        <g fill="#333">
                                            <text x="364" y="453" font-size="43" fill="#222">Amsterdam</text>
                                            <text x="850" y="476" font-size="34">Nieuwmarkt/</text>
                                            <text x="850" y="519" font-size="34">Lastage</text>
                                            <text x="1243" y="539" font-size="34" text-anchor="start">Oostelijke Eilande</text>
                                            <text x="224" y="811" font-size="34" text-anchor="end">achtengordel</text>
                                            <text x="88" y="1360" font-size="32" text-anchor="end">tier</text>
                                            <text x="650" y="725" font-size="39" fill="#777">Centrum</text>
                                        </g>
                                        <g fill="#222" font-size="27">
                                            <text transform="translate(1276 460) rotate(-42)">Kattenburgerstraat</text>
                                            <text transform="translate(590 804) rotate(17)">Amstel</text>
                                            <text transform="translate(366 716) rotate(58)">Rokin</text>
                                            <text transform="translate(1400 895) rotate(-43)">Sarphatistraat</text>
                                            <text transform="translate(1242 1082) rotate(-17)">Mauritskade</text>
                                            <text transform="translate(1453 276) rotate(13)" text-anchor="start">Piet H</text>
                                            <text transform="translate(1294 1280) rotate(-17)" text-anchor="start">Oosterpark</text>
                                            <text x="1402" y="172">Jan Schaeferbru</text>
                                            <text transform="translate(520 94) rotate(35)" fill="#666" font-size="30">Ispoor</text>
                                        </g>
                                        <g fill="#4a80ad" stroke-opacity=".4" font-size="33">
                                            <text x="935" y="374" font-size="28" font-style="italic">Oosterdok</text>
                                            <text transform="translate(1070 382) rotate(75)">Oosterdok</text>
                                            <text transform="translate(230 542) rotate(-86)" font-size="30">Singel</text>
                                            <text transform="translate(1390 336) rotate(22)" text-anchor="start">Dijksgra</text>
                                            <text transform="translate(1395 722) rotate(25)">Nieuwe Vaart</text>
                                            <text transform="translate(1242 784) rotate(28)">Entrepotdok</text>
                                            <text transform="translate(453 1305) rotate(4)">Singelgracht</text>
                                        </g>
                                        <g font-weight="700">
                                            <text x="646" y="152" font-size="29" fill="#3a42a8">Amsterdam</text>
                                            <text x="646" y="188" font-size="29" fill="#3a42a8">Centraal</text>
                                            <text x="1205" y="837" font-size="27" fill="#660033">Artis</text>
                                        </g>
                                        <text x="1272" y="1183" font-size="30" fill="#3a8a4a" font-style="italic" text-anchor="start">Oosterpark</text>
                                        <text x="1499" y="1092" font-size="28" fill="#777" font-style="italic" text-anchor="start">D</text>
                                    </g>
                                    <rect x="965" y="16" width="98" height="40" fill="#f8d5cc" stroke="#d98b78" stroke-width="3"/>
                                    <text x="1014" y="54" font-size="27" fill="#5a2b20" text-anchor="middle">S116</text>

                                    <!-- marker -->
                                    <path d="M775 745 830 690Q850 680 840 700L800 745z" fill="#000" opacity=".25"/>
                                    <path d="M773 746C762 708 736 698 736 667a37 37 0 0 1 74 0C810 698 784 708 773 746z" fill="url(#pinBlue)" stroke="#2a6ea5" stroke-width="3"/>
                                    <circle cx="773" cy="666" r="13" fill="#fff"/>
                                </svg>
                                <div class="map-search d-flex">
                                    <input type="text" class="field" placeholder="Zoek naar een locatie" aria-label="Zoek naar een locatie">
                                    <button type="button" class="d-flex align-items-center justify-content-center" aria-label="Zoeken"><svg class="ico"><use href="#i-search"/></svg></button>
                                </div>
                                <div class="map-zoom d-flex flex-column">
                                    <button type="button" class="d-flex align-items-center justify-content-center" aria-label="Inzoomen"><svg width="14" height="14"><path d="M1 7h12M7 1v12" stroke="#000" stroke-width="2"/></svg></button>
                                    <button type="button" class="d-flex align-items-center justify-content-center" aria-label="Uitzoomen"><svg width="14" height="14"><path d="M1 7h12" stroke="#000" stroke-width="2"/></svg></button>
                                </div>
                                <div class="map-credit d-flex align-items-center">
                                    <svg width="12" height="8"><path fill="#4c7be1" d="M0 0h12v4H0z"/><path fill="#ffd500" d="M0 4h12v3H0z"/><path fill="#e0bc00" d="M0 7h12v1H0z"/></svg>
                                    <div><a href="#">Leaflet</a> | © <a href="#">OpenStreetMap</a> contributors</div>
                                </div>
                            </div>
                        </div>
                    </form>

                    <div class="section-head d-flex align-items-center">
                        <svg class="ico ico-20" color="#eab308"><use href="#i-user"/></svg>
                        <h2 class="mb-0">Gebruikersaccount</h2>
                    </div>
                    <p class="muted mt-1 mb-0">Systeemtoegang en accountbeheer Beheer gebruikersaccounts in <a href="#" class="pink-link">Gebruikersbeheer <svg class="ico ico-12"><use href="#i-ext"/></svg></a></p>
                </div>
            </main>
        </div>
    </div>

    <!-- Bootstrap JS -->
    <script src="https://cdn.jsdelivr.net/npm/bootstrap@5.3.2/dist/js/bootstrap.bundle.min.js"></script>
</body>
</html>
